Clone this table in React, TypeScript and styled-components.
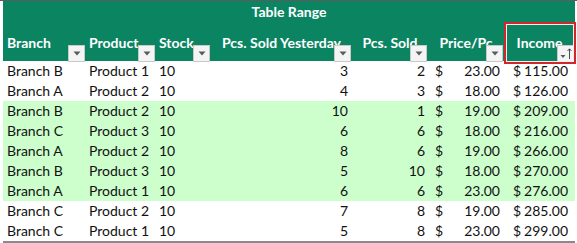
import React from "react";
import styled, { createGlobalStyle } from "styled-components";

const Global = createGlobalStyle`
  html, body { margin: 0; padding: 0; background: #ffffff; }
  body { font-family: Lato, "Liberation Sans", sans-serif; }
`;

const Sheet = styled.div`
  width: 577px;
  height: 243px;
  overflow: hidden;
  box-sizing: border-box;
  border-top: 1px solid #5c5c5c;
  padding-left: 3px;
  background: #ffffff;
`;

const Grid = styled.div`
  display: grid;
  grid-template-columns: 83px 70px 55px 141px 76px 76px 71px;
  width: 572px;
  border-bottom: 2px solid #8a8a8a;
`;

const Title = styled.div`
  grid-column: 1 / -1;
  height: 21px;
  line-height: 21px;
  text-align: center;
  background: #0b8462;
  color: #ffffff;
  font-weight: 700;
  font-size: 14px;
  box-sizing: border-box;
`;

const HeadCell = styled.div<{ $align: "left" | "center"; $pad: number }>`
  position: relative;
  height: 39px;
  box-sizing: border-box;
  padding-top: 11px;
  padding-left: ${(p) => p.$pad}px;
  background: #0b8462;
  color: #ffffff;
  font-weight: 700;
  font-size: 14px;
  line-height: 20px;
  white-space: nowrap;
  text-align: ${(p) => p.$align};
  overflow: visible;
`;

const FilterButton = styled.span<{ $wide?: boolean }>`
  position: absolute;
  right: 1px;
  bottom: -1px;
  width: 17px;
  height: 17px;
  box-sizing: border-box;
  background: #f4f4f4;
  border: 1px solid #c9c9c9;
  display: flex;
  align-items: center;
  justify-content: ${(p) => (p.$wide ? "flex-start" : "center")};
  padding-left: ${(p) => (p.$wide ? "1px" : "0")};
  z-index: 2;
`;

const Selection = styled.span`
  position: absolute;
  left: 0px;
  top: 0px;
  right: -1px;
  bottom: -3px;
  border: 2px solid #d3262c;
  box-shadow: inset 0 0 0 1px #e6f2ec;
  pointer-events: none;
  z-index: 3;
`;

const Cell = styled.div<{ $bg: string; $align: "left" | "right"; $padL?: number; $padR?: number }>`
  height: 20px;
  line-height: 20px;
  font-size: 14px;
  color: #111111;
  background: ${(p) => p.$bg};
  text-align: ${(p) => p.$align};
  padding-left: ${(p) => p.$padL ?? 0}px;
  padding-right: ${(p) => p.$padR ?? 0}px;
  box-sizing: border-box;
  white-space: nowrap;
`;

const MoneyCell = styled.div<{ $bg: string; $padL: number; $padR: number }>`
  height: 20px;
  line-height: 20px;
  font-size: 14px;
  color: #111111;
  background: ${(p) => p.$bg};
  display: flex;
  justify-content: space-between;
  padding-left: ${(p) => p.$padL}px;
  padding-right: ${(p) => p.$padR}px;
  box-sizing: border-box;
  white-space: nowrap;
`;

const Arrow = () => (
  <svg width="8" height="5" viewBox="0 0 8 5">
    <path d="M0.5 0.5 L7.5 0.5 L4 4.5 Z" fill="#5a5a5a" />
  </svg>
);

const SortArrow = () => (
  <svg width="14" height="15" viewBox="0 0 14 15">
    <path d="M1.5 9 L6.5 9 L4 12 Z" fill="#5a5a5a" />
    <path d="M10.5 3 L10.5 13 M8.5 5 L10.5 2.8 L12.5 5" stroke="#4a4a4a" strokeWidth="1" fill="none" />
  </svg>
);

type Row = [string, string, number, number, number, number, number];

const rows: Row[] = [
  ["Branch B", "Product 1", 10, 3, 2, 23, 115],
  ["Branch A", "Product 2", 10, 4, 3, 18, 126],
  ["Branch B", "Product 2", 10, 10, 1, 19, 209],
  ["Branch C", "Product 3", 10, 6, 6, 18, 216],
  ["Branch A", "Product 2", 10, 8, 6, 19, 266],
  ["Branch B", "Product 3", 10, 5, 10, 18, 270],
  ["Branch A", "Product 1", 10, 6, 6, 23, 276],
  ["Branch C", "Product 2", 10, 7, 8, 19, 285],
  ["Branch C", "Product 1", 10, 5, 8, 23, 299],
];

const headers: { label: string; align: "left" | "center"; pad: number }[] = [
  { label: "Branch", align: "left", pad: 4 },
  { label: "Product", align: "left", pad: 3 },
  { label: "Stock", align: "left", pad: 3 },
  { label: "Pcs. Sold Yesterday", align: "center", pad: 0 },
  { label: "Pcs. Sold", align: "center", pad: 0 },
  { label: "Price/Pc", align: "center", pad: 0 },
  { label: "Income", align: "center", pad: 0 },
];

export default function App() {
  return (
    <>
      <Global />
      <Sheet>
        <Grid>
          <Title>Table Range</Title>
          {headers.map((h, i) => (
            <HeadCell key={h.label} $align={h.align} $pad={h.pad}>
              {h.label}
              {i === headers.length - 1 ? (
                <>
                  <FilterButton $wide>
                    <SortArrow />
                  </FilterButton>
                  <Selection />
                </>
              ) : (
                <FilterButton>
                  <Arrow />
                </FilterButton>
              )}
            </HeadCell>
          ))}
          {rows.map((r, i) => {
            const bg = i >= 2 && i <= 6 ? "#ccffcc" : "#ffffff";
            return (
              <React.Fragment key={i}>
                <Cell $bg={bg} $align="left" $padL={4}>{r[0]}</Cell>
                <Cell $bg={bg} $align="left" $padL={3}>{r[1]}</Cell>
                <Cell $bg={bg} $align="left" $padL={3}>{r[2]}</Cell>
                <Cell $bg={bg} $align="right" $padR={4}>{r[3]}</Cell>
                <Cell $bg={bg} $align="right" $padR={3}>{r[4]}</Cell>
                <MoneyCell $bg={bg} $padL={7} $padR={4}>
                  <span>$</span>
                  <span>{r[5].toFixed(2)}</span>
                </MoneyCell>
                <MoneyCell $bg={bg} $padL={9} $padR={7}>
                  <span>$</span>
                  <span>{r[6].toFixed(2)}</span>
                </MoneyCell>
              </React.Fragment>
            );
          })}
        </Grid>
      </Sheet>
    </>
  );
}
